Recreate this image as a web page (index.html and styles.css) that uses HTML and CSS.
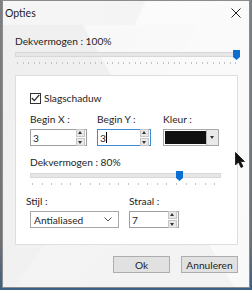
FILE: index.html
```html
<!DOCTYPE html>
<html>
<head>
<meta charset="utf-8">
<link rel="stylesheet" href="styles.css">
</head>
<body>
<div class="desk">
  <div class="win">
    <div class="titlebar">
      <span class="title">Opties</span>
      <svg class="close" width="10" height="10" viewBox="0 0 10 10"><path d="M0.5 0.5L9.5 9.5M9.5 0.5L0.5 9.5" stroke="#222" stroke-width="1"/></svg>
    </div>
    <div class="content">
      <div class="lbl top">Dekvermogen : 100%</div>
      <div class="slider s1">
        <div class="track"></div>
        <svg class="thumb" style="left:100%" width="7" height="10" viewBox="0 0 7 10"><path d="M0 0H7V7L3.5 10L0 7Z" fill="#0a6fd0"/></svg>
        <div class="ticks t1"></div>
      </div>
      <div class="panel">
        <div class="chk">
          <span class="box"><svg width="9" height="8" viewBox="0 0 9 8"><path d="M0.8 4L3.3 6.6L8.3 0.8" fill="none" stroke="#222" stroke-width="1.2"/></svg></span>
          <span>Slagschaduw</span>
        </div>
        <div class="row r1">
          <div class="field fx">
            <div class="lbl">Begin X :</div>
            <div class="spin"><span class="val">3</span><span class="arrows"><span class="up"></span><span class="dn"></span></span></div>
          </div>
          <div class="field fy">
            <div class="lbl">Begin Y :</div>
            <div class="spin focus"><span class="val">3<span class="caret"></span></span><span class="arrows"><span class="up"></span><span class="dn"></span></span></div>
          </div>
          <div class="field fk">
            <div class="lbl">Kleur :</div>
            <div class="color"><span class="swatch"></span><span class="drop"></span></div>
          </div>
        </div>
        <div class="lbl op">Dekvermogen : 80%</div>
        <div class="slider s2">
          <div class="track"></div>
          <svg class="thumb" style="left:80%" width="7" height="10" viewBox="0 0 7 10"><path d="M0 0H7V7L3.5 10L0 7Z" fill="#0a6fd0"/></svg>
          <div class="ticks t2"></div>
        </div>
        <div class="row r2">
          <div class="field fs">
            <div class="lbl">Stijl :</div>
            <div class="select"><span class="val">Antialiased</span><svg class="chev" width="8" height="5" viewBox="0 0 8 5"><path d="M0.5 0.5L4 4L7.5 0.5" fill="none" stroke="#555" stroke-width="1"/></svg></div>
          </div>
          <div class="field fr">
            <div class="lbl">Straal :</div>
            <div class="spin"><span class="val">7</span><span class="arrows"><span class="up"></span><span class="dn"></span></span></div>
          </div>
        </div>
      </div>
      <div class="buttons">
        <div class="btn">Ok</div>
        <div class="btn">Annuleren</div>
      </div>
    </div>
  </div>
  <svg class="cursor" width="10" height="16" viewBox="0 0 10 16"><path d="M0.5 0.5V13L3.5 10L6 15.5L8 14.5L5.5 9.5H9.5Z" fill="#111" stroke="#111" stroke-width="0.8"/></svg>
</div>
</body>
</html>
```

FILE: styles.css
```css
html, body {
  margin: 0;
  padding: 0;
}
body {
  width: 252px;
  height: 290px;
  overflow: hidden;
  background: #5a5e63;
  font-family: "Lato", "Noto Sans", sans-serif;
  font-size: 10.2px;
  color: #1e1e1e;
}
.desk {
  position: relative;
  width: 252px;
  height: 290px;
  background: linear-gradient(#7d8085, #6d7075 85%, #3c5f86 100%);
}
.win {
  position: absolute;
  left: 2px;
  top: 0;
  width: 246px;
  height: 286px;
  border: 1px solid #8c8c8c;
  background: #f0f0f0;
  display: flex;
  flex-direction: column;
}
.titlebar {
  height: 24px;
  display: flex;
  align-items: center;
  justify-content: space-between;
  padding: 0 8px 0 2px;
  background: linear-gradient(115deg, #f6f6f6 0%, #f4f4f4 55%, #fbfbfb 56%, #fafafa 100%);
}
.title {
  font-size: 10.5px;
  margin-top: -1px;
}
.close {
  display: block;
}
.content {
  flex: 1;
  padding: 9px 11px 0 12px;
  display: flex;
  flex-direction: column;
  background:
    linear-gradient(60deg, transparent 58%, rgba(255,255,255,0.55) 58.2%) ,
    linear-gradient(125deg, #efefef 0%, #f1f1f1 45%, #f4f4f4 46%, #f2f2f2 100%);
}
.lbl {
  line-height: 14px;
  white-space: nowrap;
}
.slider {
  position: relative;
  height: 16px;
}
.s1 {
  margin-top: 1px;
  margin-right: -2px;
}
.track {
  position: absolute;
  left: 0;
  right: 0;
  top: 3px;
  height: 3px;
  background: #e6e6e6;
  border: 1px solid #d8d8d8;
}
.thumb {
  position: absolute;
  top: 1px;
  margin-left: -7px;
  display: block;
}
.ticks {
  position: absolute;
  left: 2px;
  right: 2px;
  top: 13px;
  height: 2px;
}
.t1 {
  background: repeating-linear-gradient(90deg, #c2c2c2 0 1px, transparent 1px 5.6px);
}
.t2 {
  background: repeating-linear-gradient(90deg, #c2c2c2 0 1px, transparent 1px 9.6px);
}
.panel {
  margin-top: 10px;
  height: 168px;
  background: #fff;
  border: 1px solid #dedede;
  padding: 0 16px 0 14px;
  display: flex;
  flex-direction: column;
}
.chk {
  display: flex;
  align-items: center;
  gap: 3px;
  margin-top: 15px;
  height: 14px;
}
.box {
  width: 11px;
  height: 11px;
  border: 1px solid #333;
  box-sizing: border-box;
  display: flex;
  align-items: center;
  justify-content: center;
  background: #fff;
}
.box svg {
  display: block;
}
.row {
  display: flex;
}
.r1 {
  margin-top: 7px;
  gap: 10px;
}
.field {
  display: flex;
  flex-direction: column;
  gap: 3px;
}
.fx { width: 57px; }
.fy { width: 54px; margin-right: 2px; }
.fk { width: 56px; }
.spin {
  height: 17px;
  box-sizing: border-box;
  border: 1px solid #9e9e9e;
  background: #fff;
  display: flex;
  align-items: center;
  justify-content: space-between;
  padding: 0 1px 0 2px;
}
.spin.focus {
  border-color: #3c8ad8;
}
.val {
  line-height: 14px;
  display: flex;
  align-items: center;
}
.caret {
  display: inline-block;
  width: 1px;
  height: 11px;
  background: #000;
}
.arrows {
  display: flex;
  flex-direction: column;
  gap: 1px;
}
.up, .dn {
  width: 7px;
  height: 6px;
  background: #e8e8e8;
  border: 1px solid #c6c6c6;
  position: relative;
}
.up::after, .dn::after {
  content: "";
  position: absolute;
  left: 1px;
  border-left: 2.5px solid transparent;
  border-right: 2.5px solid transparent;
}
.up::after {
  top: 1px;
  border-bottom: 3px solid #333;
}
.dn::after {
  top: 2px;
  border-top: 3px solid #333;
}
.color {
  height: 17px;
  box-sizing: border-box;
  border: 1px solid #a8a8a8;
  display: flex;
  background: #fff;
}
.swatch {
  flex: 1;
  background: #111;
  margin: 1px 0 1px 1px;
}
.drop {
  width: 11px;
  background: #e9e9e9;
  border-left: 1px solid #bdbdbd;
  position: relative;
}
.drop::after {
  content: "";
  position: absolute;
  left: 3px;
  top: 6px;
  border-left: 2.5px solid transparent;
  border-right: 2.5px solid transparent;
  border-top: 3px solid #333;
}
.op {
  margin-top: 9px;
}
.s2 {
  margin-top: 1px;
}
.r2 {
  margin-top: 8px;
  gap: 10px;
}
.fs { width: 89px; }
.fs .lbl { margin-left: -4px; }
.fr { width: 50px; }
.select {
  height: 17px;
  box-sizing: border-box;
  border: 1px solid #a8a8a8;
  background: #fff;
  display: flex;
  align-items: center;
  justify-content: space-between;
  padding: 0 6px 0 3px;
}
.chev {
  display: block;
}
.buttons {
  display: flex;
  justify-content: flex-end;
  gap: 11px;
  margin-top: 11px;
}
.btn {
  width: 57px;
  height: 17px;
  box-sizing: border-box;
  border: 1px solid #adadad;
  background: #e1e1e1;
  display: flex;
  align-items: center;
  justify-content: center;
}
.cursor {
  position: absolute;
  left: 235px;
  top: 152px;
  display: block;
}
```
